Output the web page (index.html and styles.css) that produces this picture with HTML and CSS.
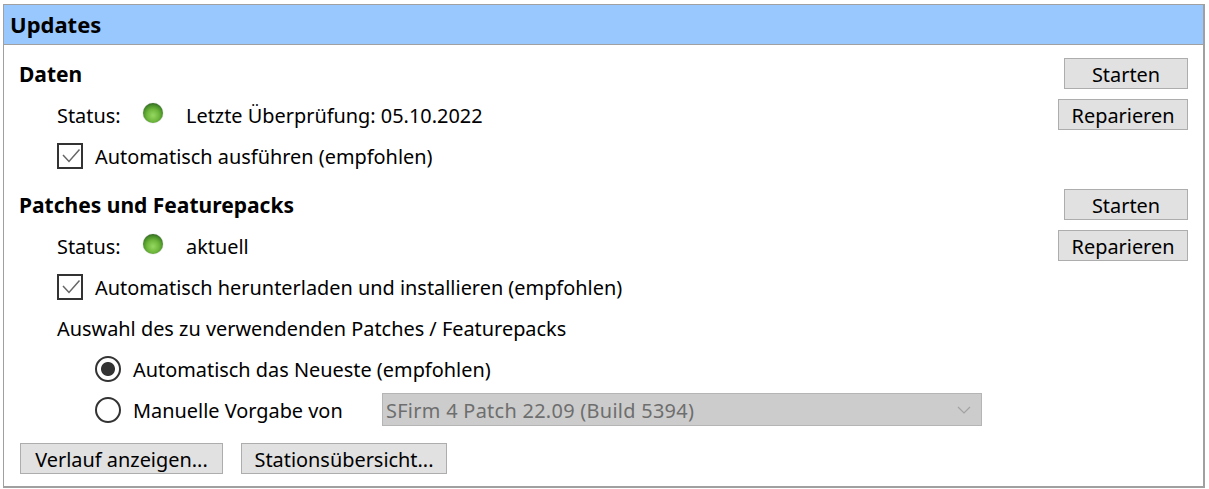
FILE: index.html
```html
<!DOCTYPE html>
<html>
<head>
  <link rel="stylesheet" href="styles.css">
</head>
<body>
  <div class="panel">
    <div class="panel-title">Updates</div>
    <div class="panel-content">

      <div class="section">
        <div class="row">
          <div class="section-title">Daten</div>
          <button class="button button-start">Starten</button>
        </div>
        <div class="row indent">
          <span class="text status-label">Status:</span>
          <span class="status-led"></span>
          <span class="text">Letzte Überprüfung: 05.10.2022</span>
          <button class="button button-repair">Reparieren</button>
        </div>
        <div class="row indent">
          <svg class="checkbox" viewBox="0 0 26 26"><rect x="1" y="1" width="24" height="24" fill="#fff" stroke="#333" stroke-width="2"/><path d="M6 12 L12 18.5 L22.5 6.5" fill="none" stroke="#666" stroke-width="1.5"/></svg>
          <span class="text">Automatisch ausführen (empfohlen)</span>
        </div>
      </div>

      <div class="section">
        <div class="row">
          <div class="section-title">Patches und Featurepacks</div>
          <button class="button button-start">Starten</button>
        </div>
        <div class="row indent">
          <span class="text status-label">Status:</span>
          <span class="status-led"></span>
          <span class="text">aktuell</span>
          <button class="button button-repair">Reparieren</button>
        </div>
        <div class="row indent">
          <svg class="checkbox" viewBox="0 0 26 26"><rect x="1" y="1" width="24" height="24" fill="#fff" stroke="#333" stroke-width="2"/><path d="M6 12 L12 18.5 L22.5 6.5" fill="none" stroke="#666" stroke-width="1.5"/></svg>
          <span class="text">Automatisch herunterladen und installieren (empfohlen)</span>
        </div>
        <div class="row indent">
          <span class="text">Auswahl des zu verwendenden Patches / Featurepacks</span>
        </div>
        <div class="row indent-2">
          <span class="radio radio-checked"></span>
          <span class="text">Automatisch das Neueste (empfohlen)</span>
        </div>
        <div class="row indent-2">
          <span class="radio"></span>
          <span class="text radio-label">Manuelle Vorgabe von</span>
          <div class="select">
            <span class="text select-value">SFirm 4 Patch 22.09 (Build 5394)</span>
            <svg class="select-arrow" viewBox="0 0 14 8"><path d="M1 1 L7 7 L13 1" fill="none" stroke="#a2a2a2" stroke-width="1.2"/></svg>
          </div>
        </div>
      </div>

      <div class="footer">
        <button class="button button-history">Verlauf anzeigen...</button>
        <button class="button button-stations">Stationsübersicht...</button>
      </div>

    </div>
  </div>
</body>
</html>
```

FILE: styles.css
```css
body {
  font-family: 'Noto Sans', 'Open Sans', sans-serif;
  font-size: 19.9px;
  margin: 0;
  padding: 4px 4px 0 3px;
  background-color: #ffffff;
  color: #000000;
}

.panel {
  height: 484px;
  box-sizing: border-box;
  border: 1px solid #a0a0a0;
  border-width: 1px 2px 2px 1px;
}

.panel-title {
  height: 39px;
  line-height: 39px;
  padding-left: 6px;
  font-size: 22px;
  font-weight: 700;
  background-color: #99c8ff;
  border-bottom: 1px solid #a0a0a0;
}

.panel-content {
  padding: 13px 15px 0 16px;
}

.section {
  display: flex;
  flex-direction: column;
  gap: 10px;
  margin-bottom: 18px;
}

.row {
  display: flex;
  align-items: center;
  height: 31px;
}

.indent {
  padding-left: 37px;
}

.indent-2 {
  padding-left: 75px;
}

.text {
  margin-top: 2px;
}

.section-title {
  font-size: 21px;
  font-weight: 700;
  margin-left: -1px;
}

.status-label {
  width: 86px;
}

.status-led {
  width: 20px;
  height: 20px;
  margin-right: 23px;
  margin-bottom: 3px;
  border-radius: 50%;
  background: radial-gradient(circle at 50% 62%, #96d862 0%, #6fb83c 38%, #4a9029 62%, #2c5a22 82%, #3c4a36 100%);
  box-shadow: 0 0 1px #888;
}

.checkbox {
  width: 26px;
  height: 26px;
  margin-right: 12px;
}

.radio {
  width: 26px;
  height: 26px;
  margin-right: 12px;
  box-sizing: border-box;
  border: 2px solid #333;
  border-radius: 50%;
  background-color: #fff;
}

.radio-checked {
  background: radial-gradient(circle, #333 0, #333 6.5px, #fff 7.5px);
}

.radio-label {
  width: 249px;
}

.select {
  display: flex;
  align-items: center;
  justify-content: space-between;
  width: 600px;
  height: 33px;
  box-sizing: border-box;
  padding: 0 10px 0 3px;
  color: #6e6e6e;
  background-color: #cccccc;
  border: 1px solid #b5b5b5;
}

.select-value {
  letter-spacing: 0.3px;
}

.select-arrow {
  width: 14px;
  height: 8px;
}

.button {
  height: 31px;
  padding: 2px 0 0 0;
  font-family: inherit;
  font-size: inherit;
  color: #000;
  background-color: #e1e1e1;
  border: 1px solid #adadad;
}

.button-start {
  width: 124px;
  margin-left: auto;
}

.button-repair {
  width: 130px;
  margin-left: auto;
}

.footer {
  display: flex;
  gap: 18px;
}

.button-history {
  width: 203px;
}

.button-stations {
  width: 206px;
}
```
